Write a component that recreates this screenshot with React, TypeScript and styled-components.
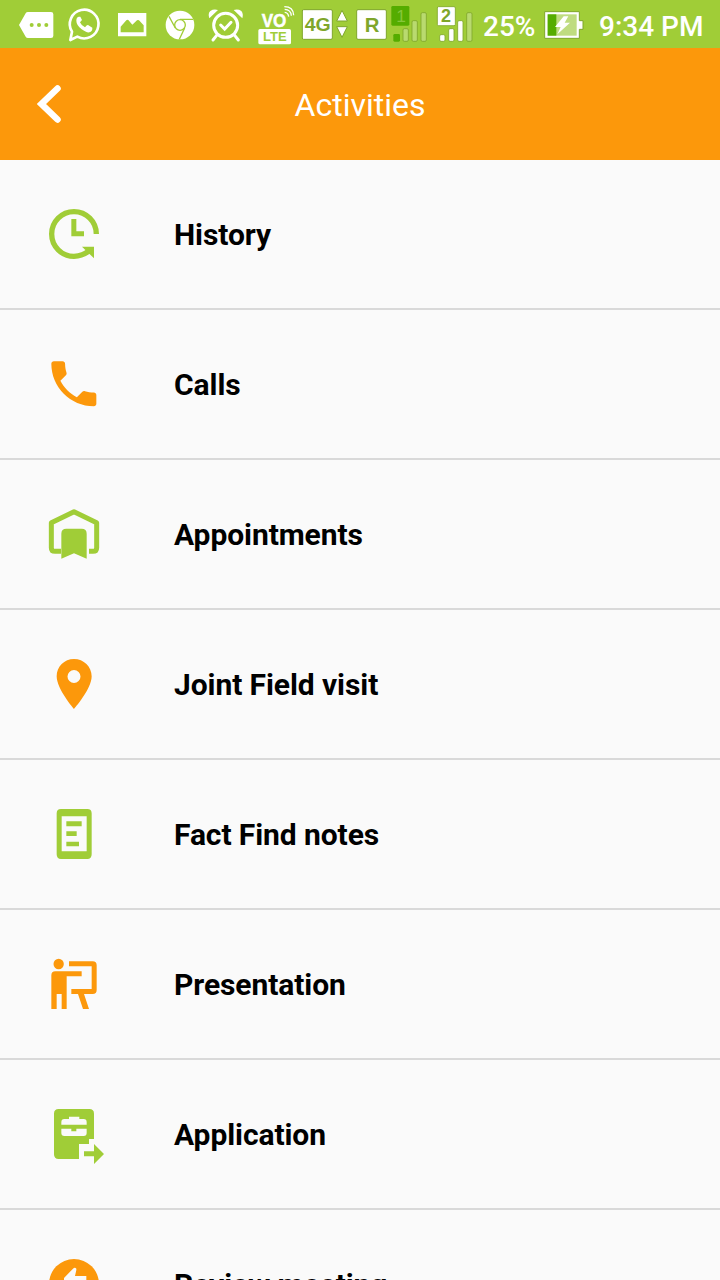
import React, { memo } from 'react'
import styled, { createGlobalStyle } from 'styled-components'

const colors = {
	GREEN: '#A0CD37',
	GREEN_DARK: '#55AC00',
	GREEN_SHADE: '#7FA62B',
	ORANGE: '#FC980B',
	WHITE: '#FFFFFF',
	PAPER: '#FAFAFA',
	LINE: '#D9D9D9',
	BLACK: '#000000',
}

const GlobalStyle = createGlobalStyle`
	html, body {
		margin: 0;
		height: 1280px;
		overflow: hidden;
		background: ${colors.PAPER};
	}
	body {
		font-family: Roboto, 'Liberation Sans', sans-serif;
	}
`

const HistoryIcon = () => (
	<>
		<path
			d="M169 102A67 67 0 1 0 102 169Q128 168 148 152"
			fill="none"
			stroke="currentColor"
			strokeWidth="16"
		/>
		<path d="M126 140H162V175Z" />
		<path d="M94 57H109V94H132V109H94Z" />
	</>
)

const CallsIcon = () => (
	<path
		transform="translate(11.500 11.500) scale(7.500)"
		d="M6.620 10.790c1.440 2.830 3.760 5.140 6.590 6.590l2.200-2.200c.270-.270.670-.360 1.020-.240 1.120.370 2.330.570 3.570.570.550 0 1 .450 1 1V20c0 .550-.450 1-1 1-9.390 0-17-7.610-17-17 0-.550.450-1 1-1h3.500c.550 0 1 .450 1 1 0 1.250.200 2.450.570 3.570.110.350.030.740-.250 1.020l-2.200 2.200z"
	/>
)

const AppointmentsIcon = () => (
	<>
		<path
			d="M63 154H45Q34 154 34 143V68L102 35L170 68V143Q170 154 159 154H147"
			fill="none"
			stroke="currentColor"
			strokeWidth="15"
			strokeLinejoin="round"
		/>
		<path d="M64 176V101Q64 86 79 86H125Q140 86 140 101V176L102 160Z" />
	</>
)

const VisitIcon = () => (
	<path
		fillRule="evenodd"
		d="M102 27C73 27 50 50 50 79C50 117 102 177 102 177C102 177 155 117 155 79C155 50 131 27 102 27ZM102 60A19.500 19.500 0 1 1 102 99A19.500 19.500 0 1 1 102 60Z"
	/>
)

const NotesIcon = () => (
	<>
		<path
			fillRule="evenodd"
			d="M63 27H142Q155 27 155 40V163Q155 177 142 177H63Q50 177 50 163V40Q50 27 63 27ZM65 49V154H140V49Z"
		/>
		<path d="M79 64H125V79H79ZM79 94H110V108H79ZM79 125H117V139H79Z" />
	</>
)

const PresentationIcon = () => (
	<>
		<circle cx="56" cy="42" r="15.500" />
		<path d="M46 64H125V79H80V177H65V132H50V177H34V76Q34 64 46 64Z" />
		<path d="M87 34H158Q170 34 170 46V120Q170 132 158 132H132L147 177H129L114 132H94V117H155V49H87Z" />
	</>
)

const ApplicationIcon = () => (
	<>
		<path d="M56 27H148Q162 27 162 41V117H147V147H117V177H56Q42 177 42 163V41Q42 27 56 27Z" />
		<path
			fill={colors.PAPER}
			d="M64 74V67Q64 57 73 57H87V50H118V57H131Q140 57 140 67V74ZM64 86H94V94H109V86H140V99Q140 108 131 108H73Q64 108 64 99Z"
		/>
		<path
			fill={colors.PAPER}
			d="M117 132H147V117H165V150H150V177H117Z"
		/>
		<path d="M132 154H162V132L192 162L162 192V169H132Z" />
	</>
)

const ReviewIcon = () => (
	<>
		<circle cx="102" cy="102" r="75" />
		<path
			fill={colors.PAPER}
			d="M72 84L99 56Q105 51 109 56V60L105 78H139V110H125V142H72Z"
		/>
	</>
)

type Activity = {
	title: string
	color: string
	Icon: () => React.ReactElement
}

const activities: Activity[] = [
	{ title: 'History', color: colors.GREEN, Icon: HistoryIcon },
	{ title: 'Calls', color: colors.ORANGE, Icon: CallsIcon },
	{ title: 'Appointments', color: colors.GREEN, Icon: AppointmentsIcon },
	{ title: 'Joint Field visit', color: colors.ORANGE, Icon: VisitIcon },
	{ title: 'Fact Find notes', color: colors.GREEN, Icon: NotesIcon },
	{ title: 'Presentation', color: colors.ORANGE, Icon: PresentationIcon },
	{ title: 'Application', color: colors.GREEN, Icon: ApplicationIcon },
	{ title: 'Review meeting', color: colors.ORANGE, Icon: ReviewIcon },
]

const StatusBar = memo(() => (
	<Status>
		<Glyph $width={60} viewBox="0 0 180 144">
			<path d="M57 75L77 40Q79 36 84 36H153Q160 36 160 43V107Q160 114 153 114H84Q79 114 77 110Z" />
			<g fill={colors.GREEN}>
				<circle cx="95" cy="75" r="6" />
				<circle cx="117" cy="75" r="6" />
				<circle cx="139" cy="75" r="6" />
			</g>
		</Glyph>
		<Glyph $width={48} viewBox="180 0 144 144">
			<path
				d="M216 95A43 43 0 1 1 232 110L211 120Z"
				fill="none"
				stroke={colors.WHITE}
				strokeWidth="8"
				strokeLinejoin="round"
			/>
			<path d="M236 50Q229 52 229 62Q229 75 245 88Q260 99 268 97Q278 94 277 83L264 75Q261 74 255 82Q244 77 240 67L246 60L241 50Z" />
		</Glyph>
		<Glyph $width={48} viewBox="324 0 144 144">
			<path
				fillRule="evenodd"
				d="M354 39H439V109H354ZM362 97H431V76L417 61Q414 59 411 61L397 74L385 60Q382 58 379 61L362 80Z"
			/>
		</Glyph>
		<Glyph $width={48} viewBox="468 0 144 144">
			<circle cx="540" cy="75" r="43" />
			<g fill="none" stroke={colors.GREEN} strokeWidth="4">
				<circle cx="540" cy="75" r="16" />
				<path d="M540 58H579M526 84L507 49M554 84L538 118" />
			</g>
		</Glyph>
		<Glyph $width={44} viewBox="612 0 132 144">
			<path d="M628 55Q623 40 631 33Q641 26 654 30ZM701 30Q714 26 724 33Q731 41 727 55Z" />
			<g fill="none" stroke={colors.WHITE} strokeWidth="9" strokeLinecap="round">
				<circle cx="677" cy="76" r="36" />
				<path d="M650 106L639 120M704 106L715 120" />
				<path d="M662 75L674 87L693 67" />
			</g>
		</Glyph>
		<Glyph $width={48} viewBox="9 0 144 144">
			<GlyphText
				x="50"
				y="81"
				fontSize="56"
				textLength="74"
				lengthAdjust="spacingAndGlyphs"
				stroke={colors.WHITE}
				strokeWidth="1.500"
			>
				VO
			</GlyphText>
			<g fill="none" stroke={colors.WHITE} strokeWidth="4">
				<path d="M119 37Q130 38 131 50M119 28Q138 29 139 47M118 20Q145 20 146 46" />
			</g>
			<rect x="40" y="87" width="98" height="46" rx="5" />
			<GlyphText x="54" y="123" fontSize="37" textLength="71" lengthAdjust="spacingAndGlyphs" fill={colors.GREEN}>
				LTE
			</GlyphText>
		</Glyph>
		<Glyph $width={54} viewBox="153 0 162 144">
			<rect x="172" y="29" width="90" height="89" rx="4" stroke={colors.GREEN_SHADE} strokeWidth="3" />
			<GlyphText x="179" y="94" fontSize="57" textLength="78" lengthAdjust="spacingAndGlyphs" fill={colors.GREEN_SHADE}>
				4G
			</GlyphText>
			<path stroke={colors.GREEN_SHADE} strokeWidth="3" d="M291 31L307 63H275ZM275 80H307L291 112Z" />
		</Glyph>
		<Glyph $width={38} viewBox="315 0 114 144">
			<rect x="335" y="29" width="89" height="89" rx="4" stroke={colors.GREEN_SHADE} strokeWidth="3" />
			<GlyphText x="359" y="96" fontSize="61" fill={colors.GREEN_SHADE}>R</GlyphText>
		</Glyph>
		<Glyph $width={42} viewBox="429 0 126 144">
			<rect x="439" y="18" width="54" height="59" rx="4" fill={colors.GREEN_DARK} />
			<GlyphText x="454" y="66" fontSize="52" $regular fill="#86C63A">1</GlyphText>
			<rect x="445" y="102" width="20" height="23" rx="4" fill={colors.GREEN_DARK} />
			<g fill="#B9DA6F" stroke={colors.GREEN_SHADE} strokeWidth="2.500">
				<rect x="474" y="86" width="16" height="38" rx="4" />
				<rect x="501" y="62" width="16" height="62" rx="4" />
				<rect x="528" y="38" width="16" height="86" rx="4" />
			</g>
		</Glyph>
		<Glyph $width={45} viewBox="555 0 135 144">
			<g stroke={colors.GREEN_SHADE} strokeWidth="2.500">
				<rect x="577" y="20" width="54" height="57" rx="4" />
				<rect x="584" y="104" width="16" height="20" rx="4" />
				<rect x="611" y="86" width="16" height="38" rx="4" />
				<rect x="638" y="62" width="16" height="62" rx="4" />
				<rect x="665" y="38" width="16" height="86" rx="4" fill="#B9DA6F" />
			</g>
			<GlyphText x="588" y="67" fontSize="54" fill={colors.GREEN_SHADE}>2</GlyphText>
		</Glyph>
		<Percent>25%</Percent>
		<Glyph $width={45} viewBox="201 0 135 144">
			<path
				stroke={colors.GREEN_SHADE}
				strokeWidth="3"
				d="M209 35H313V62H324V88H313V115H209Z"
			/>
			<rect x="218" y="43" width="87" height="64" fill="#BFDC80" />
			<rect x="218" y="43" width="26" height="64" fill={colors.GREEN_DARK} />
			<path d="M266 49H280L269 68H285L247 103L257 81H240Z" />
		</Glyph>
		<Time>9:34 PM</Time>
	</Status>
))

export default function App() {
	return (
		<Screen>
			<GlobalStyle />
			<StatusBar />
			<Header>
				<Back aria-label="Back">
					<svg width="24" height="40" viewBox="0 0 24 40">
						<path
							d="M20.500 4.500L4.500 20L20.500 35.500"
							fill="none"
							stroke="currentColor"
							strokeWidth="6.500"
							strokeLinecap="round"
						/>
					</svg>
				</Back>
				<Title>Activities</Title>
			</Header>
			<List>
				{activities.map(({ title, color, Icon }) => (
					<Row key={title}>
						<RowIcon $color={color} viewBox="0 0 210 210">
							<Icon />
						</RowIcon>
						<Label>{title}</Label>
					</Row>
				))}
			</List>
		</Screen>
	)
}

const Screen = styled.div`
	display: flex;
	flex-direction: column;
	width: 720px;
	height: 1280px;
	overflow: hidden;
	background-color: ${colors.PAPER};
`

const Status = styled.div`
	display: flex;
	align-items: center;
	flex: 0 0 48px;
	color: ${colors.WHITE};
	background-color: ${colors.GREEN};
`

const Glyph = styled.svg<{ $width: number }>`
	flex: none;
	width: ${({ $width }) => $width}px;
	height: 48px;
	fill: ${colors.WHITE};
`

const GlyphText = styled.text<{ $regular?: boolean }>`
	font-family: 'Liberation Sans', sans-serif;
	font-weight: ${({ $regular }) => ($regular ? 400 : 700)};
`

const Percent = styled.span`
	flex: none;
	width: 67px;
	padding: 5px 0 0 8px;
	box-sizing: border-box;
	font-size: 28px;
	font-weight: 500;
	line-height: 42px;
	white-space: nowrap;
`

const Time = styled(Percent)`
	width: auto;
	padding-left: 12px;
`

const Header = styled.header`
	display: grid;
	grid-template-columns: 100px 1fr 100px;
	align-items: center;
	flex: 0 0 112px;
	color: ${colors.WHITE};
	background-color: ${colors.ORANGE};
`

const Back = styled.button`
	display: flex;
	padding: 0 0 0 37px;
	border: 0;
	color: inherit;
	background: none;
`

const Title = styled.h1`
	margin: 0;
	padding-top: 2px;
	font-size: 32px;
	font-weight: 400;
	line-height: 40px;
	text-align: center;
`

const List = styled.div`
	display: flex;
	flex-direction: column;
`

const Row = styled.div`
	display: flex;
	align-items: center;
	flex: 0 0 150px;
	box-sizing: border-box;
	padding: 2px 40px 0;
	border-bottom: 2px solid ${colors.LINE};
`

const RowIcon = styled.svg<{ $color: string }>`
	flex: none;
	width: 70px;
	height: 70px;
	margin-right: 64px;
	color: ${({ $color }) => $color};
	fill: currentColor;
`

const Label = styled.span`
	color: ${colors.BLACK};
	font-size: 30px;
	font-weight: 700;
	line-height: 40px;
	letter-spacing: -0.08px;
`
